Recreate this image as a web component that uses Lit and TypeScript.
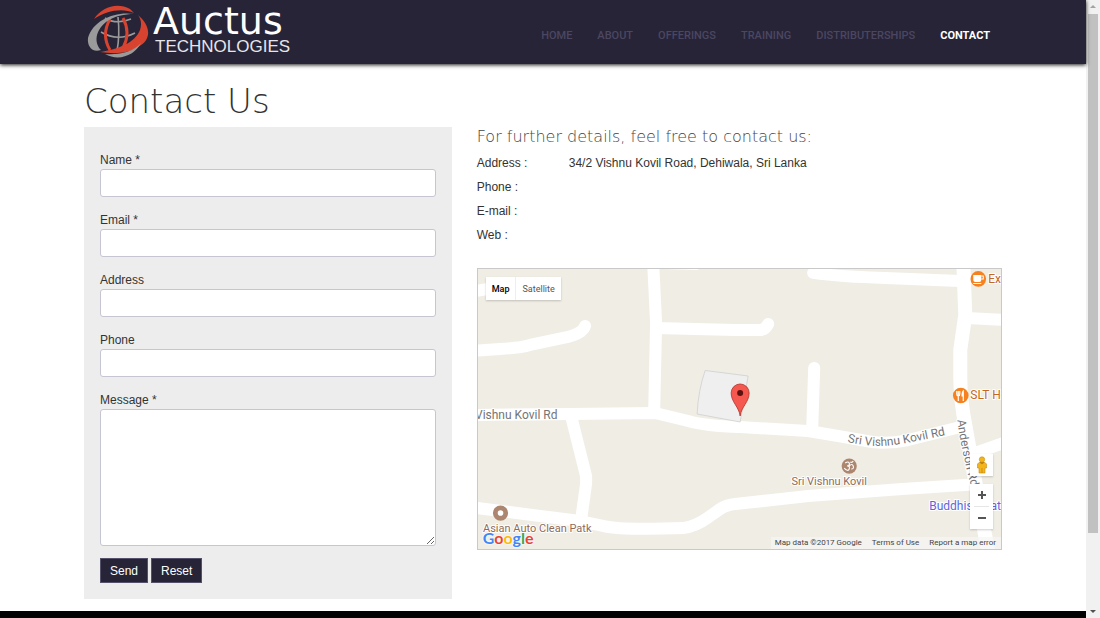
import { LitElement, html, svg, css } from "lit";
import { customElement } from "lit/decorators.js";

const NAV = ["Home", "About", "Offerings", "Training", "Distributerships", "Contact"];

const FIELDS = [
  { id: "name", label: "Name *", type: "text" },
  { id: "email", label: "Email *", type: "email" },
  { id: "address", label: "Address", type: "text" },
  { id: "phone", label: "Phone", type: "tel" },
];

const DETAILS = [
  ["Address :", "34/2 Vishnu Kovil Road, Dehiwala, Sri Lanka"],
  ["Phone :", ""],
  ["E-mail :", ""],
  ["Web :", ""],
];

@customElement("site-header")
class SiteHeader extends LitElement {
  static styles = css`
    :host {
      display: block;
      position: relative;
      background: #272437;
      box-shadow: 0 1px 4px rgba(0, 0, 0, 0.9);
    }
    .inner {
      max-width: 918px;
      height: 64px;
      margin: 0 auto;
      display: flex;
      justify-content: space-between;
      align-items: center;
    }
    .brand {
      display: flex;
      align-items: center;
      gap: 4px;
      padding-left: 3px;
      color: #fff;
      text-decoration: none;
    }
    .globe {
      width: 62px;
      height: 54px;
    }
    .words {
      display: flex;
      flex-direction: column;
      padding-bottom: 2px;
    }
    .auctus {
      font: 38px/32px "DejaVu Sans", sans-serif;
    }
    .tech {
      font: 17px/20px "Liberation Sans", sans-serif;
      padding-left: 2px;
      color: #e6e6ea;
    }
    .nav {
      display: flex;
      gap: 25px;
      padding: 8px 12px 0 0;
    }
    .link {
      font: 500 11px/16px Roboto, sans-serif;
      text-transform: uppercase;
      text-decoration: none;
      color: #4b4762;
    }
    .current {
      color: #fff;
      font-weight: 700;
    }
  `;
  render() {
    return html`
      <div class="inner">
        <a class="brand" href="#">
          <svg class="globe" viewBox="0 0 62 54" aria-hidden="true">
            <g fill="none" stroke="#9a9a9a" stroke-width="1.6">
              <path d="M18 13Q29 20 44 14" />
              <path d="M14 27Q30 37 48 28" />
              <path d="M31 12Q33 30 30 46" />
            </g>
            <path d="M23 14Q14 30 23 45" fill="none" stroke="#d8432f" stroke-width="3" />
            <path d="M36 13Q44 28 36 43" fill="none" stroke="#d8432f" stroke-width="3" />
            <path d="M7 14C15 2 30-3 43 4L47 8C36 3 20 5 7 14Z" fill="#d8432f" />
            <path d="M47 9C28 6 6 15 1 33C0 41 5 48 14 45C7 38 8 26 19 17C27 11 38 9 47 9Z" fill="#9a9a9a" />
            <path d="M51 10C64 21 65 35 51 42C40 49 27 49 13 47C31 44 48 38 53 25C55 19 54 14 51 10Z" fill="#d8432f" />
            <path d="M18 49C33 50 46 47 54 38C48 50 32 57 18 49Z" fill="#9a9a9a" />
          </svg>
          <span class="words">
            <span class="auctus">Auctus</span>
            <span class="tech">TECHNOLOGIES</span>
          </span>
        </a>
        <nav class="nav">
          ${NAV.map(
            (n) => html`<a class="link ${n === "Contact" ? "current" : ""}" href="#">${n}</a>`
          )}
        </nav>
      </div>
    `;
  }
}

@customElement("contact-form")
class ContactForm extends LitElement {
  static styles = css`
    :host {
      display: block;
    }
    .panel {
      background: #ededed;
      padding: 22px 16px 16px;
      color: #333;
      font: 12px/22px "Liberation Sans", Arial, sans-serif;
    }
    .label {
      display: block;
      height: 20px;
    }
    .box {
      display: block;
      box-sizing: border-box;
      width: 100%;
      height: 28px;
      margin: 0 0 12px;
      padding: 4px 8px;
      border: 1px solid #c6c5d2;
      border-radius: 3px;
      background: #fff;
      font: inherit;
      color: inherit;
    }
    .area {
      height: 137px;
      resize: both;
    }
    .actions {
      display: flex;
      gap: 3px;
    }
    .btn {
      border: 1px solid #54516a;
      background: #272437;
      color: #fff;
      height: 25px;
      padding: 0 9px;
      font: 12px/20px "Liberation Sans", Arial, sans-serif;
    }
  `;
  render() {
    return html`
      <form class="panel">
        ${FIELDS.map(
          (f) => html`
            <label class="label" for=${f.id}>${f.label}</label>
            <input class="box" id=${f.id} type=${f.type} />
          `
        )}
        <label class="label" for="message">Message *</label>
        <textarea class="box area" id="message"></textarea>
        <div class="actions">
          <button class="btn" type="button">Send</button>
          <button class="btn" type="reset">Reset</button>
        </div>
      </form>
    `;
  }
}

@customElement("location-map")
class LocationMap extends LitElement {
  static styles = css`
    :host {
      display: block;
    }
    .map {
      position: relative;
      height: 280px;
      border: 1px solid #c9c9c9;
      background: #f0ede5;
      overflow: hidden;
      font-family: Roboto, sans-serif;
    }
    .canvas {
      display: block;
      width: 100%;
      height: 100%;
    }
    .road {
      fill: none;
      stroke: #fff;
      stroke-width: 12px;
      stroke-linejoin: round;
    }
    .round {
      stroke-linecap: round;
    }
    .wide {
      stroke-width: 14px;
    }
    .txt {
      font: 12px Roboto, sans-serif;
      paint-order: stroke;
      stroke: #fff;
      stroke-width: 2px;
      stroke-linejoin: round;
    }
    .small {
      font-size: 11px;
    }
    .street {
      fill: #757575;
    }
    .food {
      fill: #c4661f;
    }
    .place {
      fill: #8f6b57;
    }
    .school {
      fill: #5a66dc;
    }
    .types {
      position: absolute;
      left: 8px;
      top: 8px;
      display: flex;
      box-shadow: 0 1px 2px rgba(0, 0, 0, 0.2);
    }
    .type {
      border: 0;
      background: #fff;
      height: 23px;
      padding: 0 6px;
      font: 9px/16px Roboto, sans-serif;
      color: #565656;
    }
    .type + .type {
      border-left: 1px solid #eee;
    }
    .on {
      font-weight: 500;
      color: #000;
    }
    .controls {
      position: absolute;
      right: 8px;
      bottom: 20px;
      display: flex;
      flex-direction: column;
      gap: 8px;
    }
    .group {
      display: flex;
      flex-direction: column;
      background: #fff;
      box-shadow: 0 1px 2px rgba(0, 0, 0, 0.2);
    }
    .ctl {
      border: 0;
      padding: 0;
      width: 23px;
      height: 22px;
      background: none;
      display: grid;
      place-items: center;
    }
    .rule {
      height: 1px;
      margin: 0 4px;
      background: #e6e6e6;
    }
    .google {
      position: absolute;
      left: 5px;
      bottom: 0;
      font: 700 16px/22px Lato, sans-serif;
      text-shadow: 0 0 2px #fff, 0 0 2px #fff;
    }
    .b {
      color: #4285f4;
    }
    .r {
      color: #ea4335;
    }
    .y {
      color: #fbbc05;
    }
    .g {
      color: #34a853;
    }
    .legal {
      position: absolute;
      right: 0;
      bottom: 0;
      display: flex;
      gap: 10px;
      padding: 0 5px 0 4px;
      background: rgba(245, 245, 245, 0.7);
      font: 8px/12px Roboto, sans-serif;
      color: #444;
    }
    .legal a {
      color: inherit;
      text-decoration: none;
    }
  `;

  roads() {
    return svg`
      <path class="road" d="M470 292L500 287" />
      <path class="road round" d="M470 351L500 349Q520 348 530 345L568 337Q583 333 585 326" />
      <path class="road" d="M653 262L656 323L654 414" />
      <path class="road round" d="M656 328L735 330H760Q765 330 768 324" />
      <path class="road round" d="M662 263L696 264" />
      <path class="road" d="M470 415L570 414L655 413L688 421Q705 426 740 427L808 431L838 436L872 442Q888 444 908 440L964 426" />
      <path class="road" d="M571 416L586 476V484L581 520" />
      <path class="road" d="M470 507L580 521L604 526Q620 530 683 528Q696 526 707 518L720 509Q726 505 735 504L808 496L902 489L980 484" />
      <path class="road wide" d="M963 262L965 315L960 350V376Q960 400 965 425L977 493L988 552" />
      <path class="road round" d="M813 273Q840 277 885 278L960 281" />
      <path class="road" d="M966 318L1006 320" />
      <path class="road round" d="M814 368L812 429" />
      <path class="road" d="M972 454L1006 442" />
    `;
  }

  render() {
    return html`
      <div class="map">
        <svg class="canvas" viewBox="478 269 523 280" preserveAspectRatio="xMidYMid slice" role="img" aria-label="Map of Vishnu Kovil Road">
          <defs>
            <path id="kovil" d="M847 442Q866 446 882 446Q895 446 950 434" />
            <path id="anderson" d="M957 420Q962 458 975 500" />
          </defs>
          ${this.roads()}
          <path d="M705 370.500L748 376L740 422L697 414Q698 391 705 370.500Z" fill="#efefef" stroke="#cfcfcf" stroke-width=".8" />

          <text class="txt street" x="475" y="419">Vishnu Kovil Rd</text>
          <text class="txt street"><textPath href="#kovil">Sri Vishnu Kovil Rd</textPath></text>
          <text class="txt street"><textPath href="#anderson">Anderson Rd</textPath></text>

          <circle cx="978" cy="279" r="7.800" fill="#f5811f" />
          <path d="M973 275H981V280Q981 282 979 282H975Q973 282 973 280ZM973 283H981V284H973Z" fill="#fff" />
          <path d="M981 276H983V279H981" fill="none" stroke="#fff" />
          <text class="txt food" x="988" y="283">Expo</text>

          <circle cx="960.500" cy="395.500" r="7.800" fill="#f5811f" />
          <path d="M956.500 391V394Q956.500 396 958 396T959.500 394V391M958 391V401M963 401V391Q961.800 392 961.800 396H963" fill="none" stroke="#fff" stroke-width="1.200" />
          <text class="txt food" x="970" y="399">SLT Hotel</text>

          <circle cx="849" cy="466" r="7.600" fill="#ad8670" />
          <path d="M845 463Q848 461 849 463T847 466Q850 466 849 469T844 468M849 466Q852 463 853 466T851 469M850 462Q852 463 853 461" fill="none" stroke="#fff" stroke-width="1.100" />
          <text class="txt place small" x="829" y="485" text-anchor="middle">Sri Vishnu Kovil</text>

          <circle cx="500.500" cy="513" r="5.200" fill="#fff" stroke="#ad8670" stroke-width="4.800" />
          <text class="txt place small" x="483" y="532">Asian Auto Clean Patk</text>
          <text class="txt school" x="929" y="510">Buddhist Statue</text>

          <path d="M740 416C739 407 731 402 731 393A9 9 0 0 1 749 393C749 402 741 407 740 416Z" fill="#f4584f" stroke="#b3312b" stroke-width=".8" />
          <circle cx="740" cy="393" r="3" fill="#5c130f" />
        </svg>

        <div class="types">
          <button class="type on" type="button">Map</button>
          <button class="type" type="button">Satellite</button>
        </div>

        <div class="google" aria-label="Google"><span class="b">G</span><span class="r">o</span><span class="y">o</span><span class="b">g</span><span class="g">l</span><span class="r">e</span></div>

        <div class="controls">
          <div class="group">
            <button class="ctl" type="button" aria-label="Street View">
              <svg width="12" height="18" viewBox="0 0 12 18">
                <circle cx="6" cy="3.500" r="2.700" fill="#f4b41b" stroke="#c98c12" stroke-width=".6" />
                <path d="M3 6.500H9L10.500 8V12H9V17H3V12H1.500V8Z" fill="#f4b41b" stroke="#c98c12" stroke-width=".6" />
                <path d="M4 6.500H8L6 8ZM6 12V17" fill="#b97a10" stroke="#b97a10" stroke-width=".6" />
              </svg>
            </button>
          </div>
          <div class="group">
            <button class="ctl" type="button" aria-label="Zoom in">
              <svg width="10" height="10" viewBox="0 0 10 10"><path d="M1 5H9M5 1V9" stroke="#555" stroke-width="2" /></svg>
            </button>
            <div class="rule"></div>
            <button class="ctl" type="button" aria-label="Zoom out">
              <svg width="10" height="10" viewBox="0 0 10 10"><path d="M1 5H9" stroke="#555" stroke-width="2" /></svg>
            </button>
          </div>
        </div>

        <div class="legal">
          <span>Map data ©2017 Google</span>
          <a href="#">Terms of Use</a>
          <a href="#">Report a map error</a>
        </div>
      </div>
    `;
  }
}

@customElement("app-root")
class AppRoot extends LitElement {
  static styles = css`
    :host {
      display: grid;
      grid-template-columns: minmax(0, 1fr) 14px;
      min-height: 100vh;
      background: #fff;
      color: #333;
      font: 12px/24px "Liberation Sans", Arial, sans-serif;
    }
    .page {
      display: flex;
      flex-direction: column;
    }
    .main {
      width: 100%;
      max-width: 918px;
      margin: 0 auto;
      padding: 17px 0 12px;
    }
    .title {
      margin: 0 0 6px;
      font: 200 34px/40px "DejaVu Sans", "DejaVu Sans Light", sans-serif;
      color: #333;
    }
    .columns {
      display: grid;
      grid-template-columns: minmax(0, 7fr) minmax(0, 10fr);
      gap: 25px;
      align-items: start;
    }
    .sub {
      margin: 0 0 4px;
      font: 200 16px/20px "DejaVu Sans", "DejaVu Sans Light", sans-serif;
      color: #444;
    }
    .list {
      display: grid;
      grid-template-columns: 92px 1fr;
      grid-auto-rows: 24px;
      margin: 0 0 21px;
    }
    .list dt,
    .list dd {
      margin: 0;
    }
    .footer {
      flex: 1;
      background: #000;
    }
    .bar {
      display: flex;
      flex-direction: column;
      align-items: center;
      gap: 5px;
      padding: 4px 0 4px;
      background: #f1f1f1;
    }
    .track {
      flex: 1;
      width: 10px;
    }
    .thumb {
      height: 88%;
      background: #c1c1c1;
    }
  `;
  render() {
    return html`
      <div class="page">
        <site-header></site-header>
        <main class="main">
          <h1 class="title">Contact Us</h1>
          <div class="columns">
            <contact-form></contact-form>
            <section>
              <h2 class="sub">For further details, feel free to contact us:</h2>
              <dl class="list">
                ${DETAILS.map(([k, v]) => html`<dt>${k}</dt><dd>${v}</dd>`)}
              </dl>
              <location-map></location-map>
            </section>
          </div>
        </main>
        <footer class="footer"></footer>
      </div>
      <div class="bar" aria-hidden="true">
        <svg width="6" height="5" viewBox="0 0 6 5"><path d="M0 4L3 1L6 4Z" fill="#a3a3a3" /></svg>
        <div class="track"><div class="thumb"></div></div>
        <svg width="6" height="5" viewBox="0 0 6 5"><path d="M0 1L3 4L6 1Z" fill="#505050" /></svg>
      </div>
    `;
  }
}
